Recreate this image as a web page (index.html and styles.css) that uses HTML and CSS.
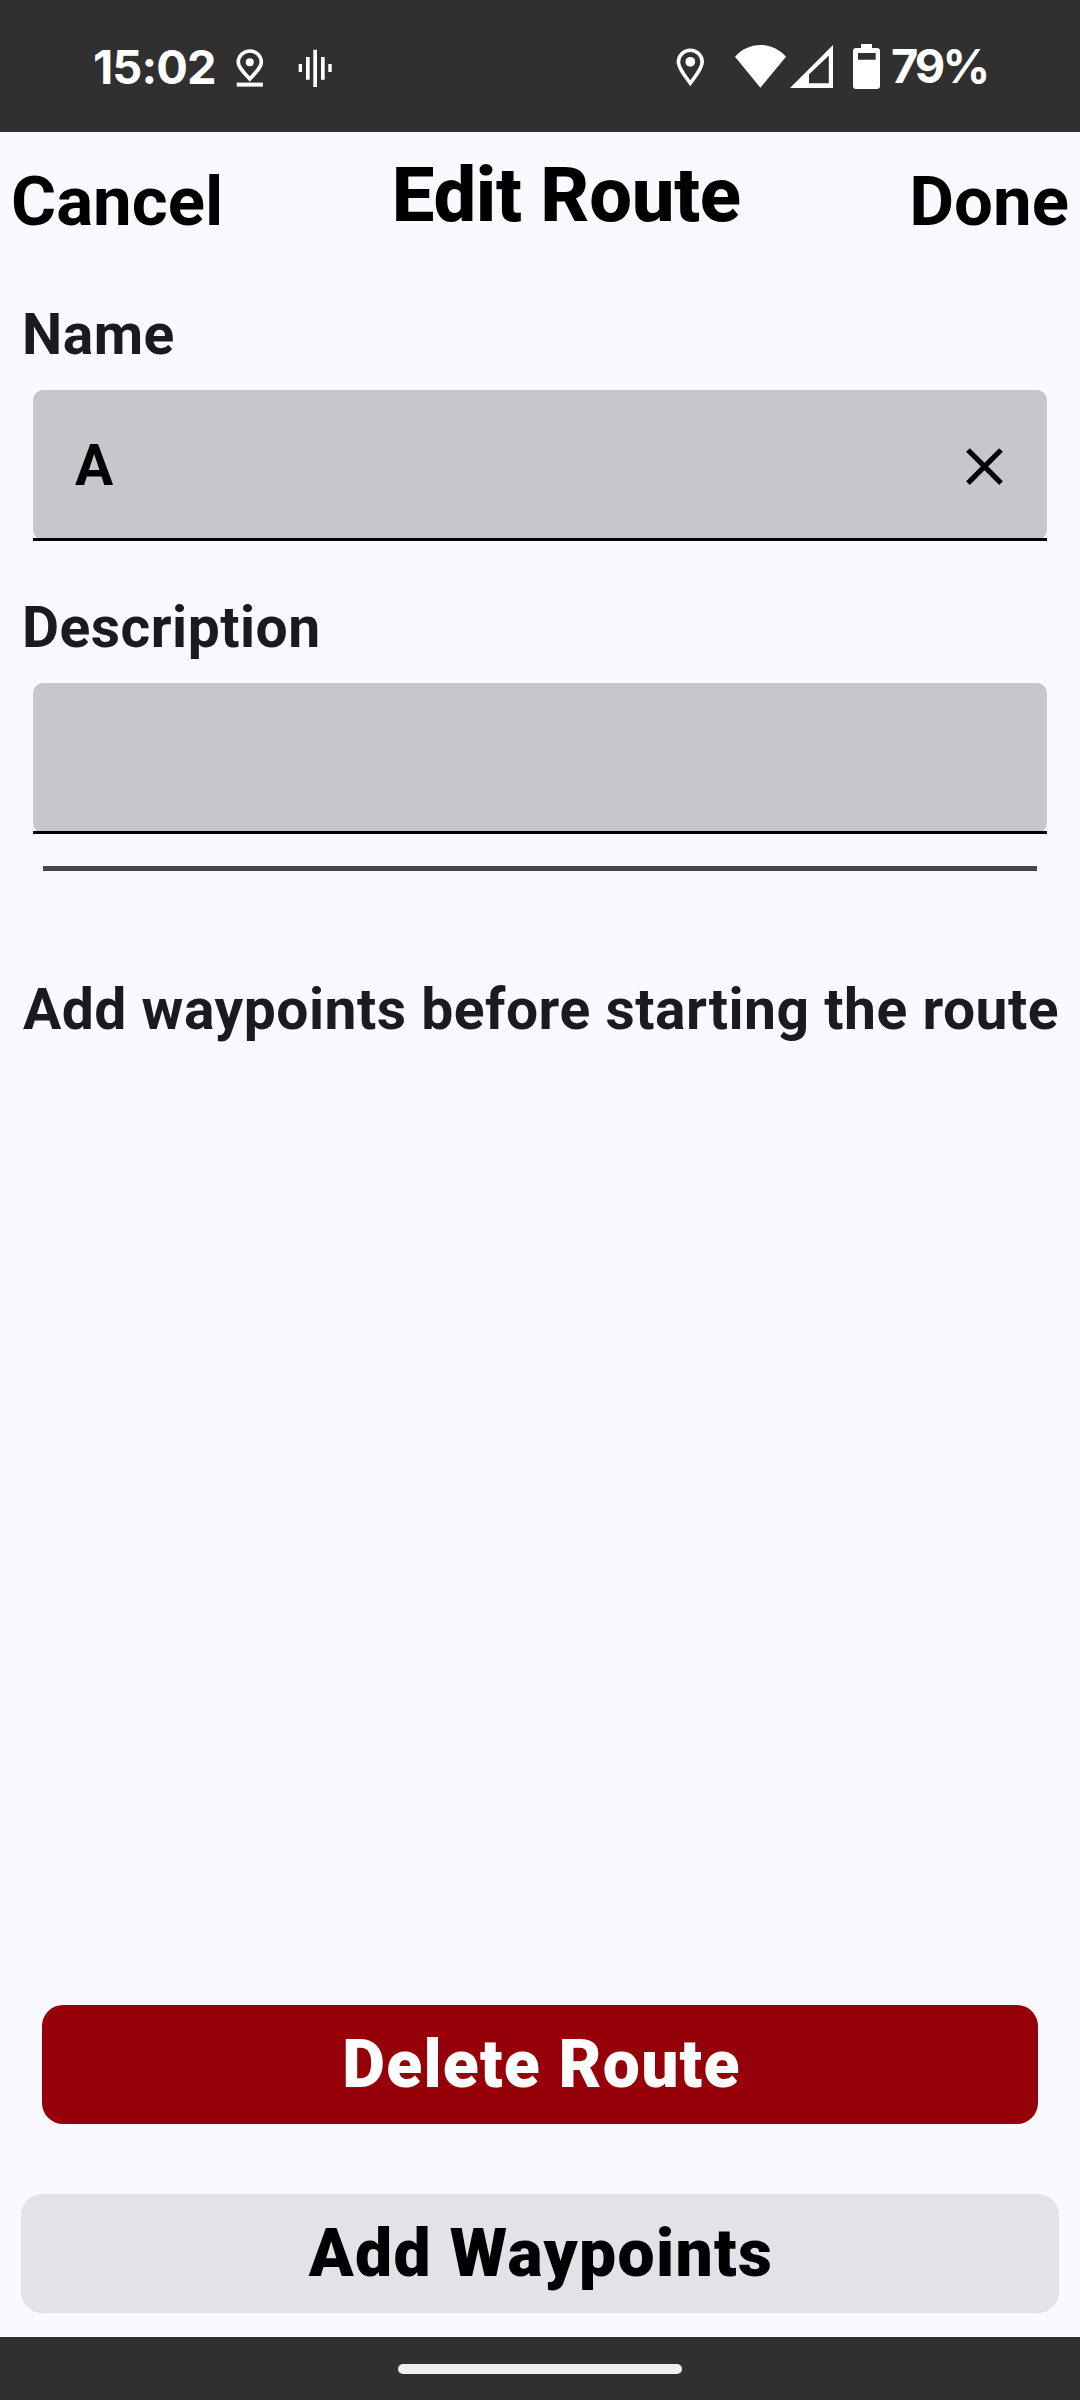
FILE: index.html
```html
<!DOCTYPE html>
<html lang="en">
<head>
<meta charset="utf-8">
<title>Edit Route</title>
<link rel="stylesheet" href="styles.css">
</head>
<body>
<div class="screen">
  <div class="status-bar">
    <div class="status-left">
      <span class="clock">15:02</span>
      <svg class="icon-drop" width="28" height="40" viewBox="0 0 28 40" fill="none">
        <path d="M13.8 31C7.8 24.6 2.3 19 2.3 14.2a11.5 11.2 0 0 1 23 0C25.3 19 19.8 24.6 13.8 31z" stroke="#fff" stroke-width="3.6"/>
        <circle cx="13.8" cy="14.2" r="4" fill="#fff"/>
        <path d="M.7 34.6h26.2v4H.7z" fill="#fff"/>
      </svg>
      <svg class="icon-wave" width="34" height="40" viewBox="0 0 34 40" fill="#fff">
        <path d="M.7 16H4v8H.7zM8 9h3.7v22.7H8zM15.3 1.7H19V39h-3.7zM23 9h3.7v22.7H23zM30.3 16h3.4v8h-3.4z"/>
      </svg>
    </div>
    <div class="status-right">
      <svg class="icon-pin" width="28" height="40" viewBox="0 0 28 40" fill="none">
        <path d="M14.3 35.2C9.4 28.4 2.4 20.5 2.4 14a11.9 11.7 0 0 1 23.8 0C26.2 20.5 19.2 28.4 14.3 35.2z" stroke="#fff" stroke-width="3.6"/>
        <circle cx="14.3" cy="13.8" r="4.9" fill="#fff"/>
      </svg>
      <svg class="icon-wifi" width="52" height="44" viewBox="0 0 52 44" fill="#fff">
        <path d="M0 12.7C7 5 16 1 25.4 1S44 5 51 12.7L25.4 43.7z"/>
      </svg>
      <svg class="icon-signal" width="43" height="44" viewBox="0 0 43 44" fill="#fff">
        <path fill-rule="evenodd" d="M0 44 43 1v43zM19 30.6V39.3h19.8V11.4z"/>
      </svg>
      <svg class="icon-battery" width="27" height="46" viewBox="0 0 27 46" fill="#fff">
        <path fill-rule="evenodd" d="M8 1h11v4h5a3 3 0 0 1 3 3v35a3 3 0 0 1-3 3H3a3 3 0 0 1-3-3V8a3 3 0 0 1 3-3h5zM5 10v6.7h17.7V10z"/>
      </svg>
      <span class="battery-level">79%</span>
    </div>
  </div>

  <header class="header">
    <span class="header-action">Cancel</span>
    <h1 class="title">Edit Route</h1>
    <span class="header-action">Done</span>
  </header>

  <main class="content">
    <div class="label">Name</div>
    <div class="field">
      <div class="field-box">
        <span class="field-value">A</span>
        <svg class="clear" width="63" height="63" viewBox="0 0 24 24"><path d="M19 6.41 17.59 5 12 10.59 6.41 5 5 6.41 10.59 12 5 17.59 6.41 19 12 13.41 17.59 19 19 17.59 13.41 12z"/></svg>
      </div>
    </div>
    <div class="label label-description">Description</div>
    <div class="field"><div class="field-box"></div></div>
    <div class="divider"></div>
    <p class="hint">Add waypoints before starting the route</p>
  </main>

  <div class="actions">
    <div class="button button-delete">Delete Route</div>
    <div class="button button-add">Add Waypoints</div>
  </div>

  <div class="nav-bar"><div class="nav-handle"></div></div>
</div>
</body>
</html>
```

FILE: styles.css
```css
* { box-sizing: border-box; }

body {
  margin: 0;
  background: #f9f9ff;
  font-family: Roboto, sans-serif;
  color: #000;
}

.screen {
  display: flex;
  flex-direction: column;
  width: 1080px;
  height: 2400px;
  white-space: nowrap;
}

.status-bar {
  display: flex;
  justify-content: space-between;
  height: 132px;
  padding: 0 92px 0 93px;
  background: #303030;
  color: #fff;
  font: 700 47px/60px Inter, sans-serif;
}

.status-left,
.status-right {
  display: flex;
  align-items: flex-start;
}

.clock {
  width: 143px;
  margin-top: 37px;
  letter-spacing: -0.9px;
}

.icon-drop { margin-top: 48px; }
.icon-wave { margin: 48px 0 0 34px; }
.icon-pin { margin-top: 48px; }
.icon-wifi { margin: 44px 0 0 31px; }
.icon-signal { margin: 44px 0 0 3px; }
.icon-battery { margin: 43px 0 0 20px; }

.battery-level {
  width: 97px;
  margin: 36px 0 0 11px;
  letter-spacing: -3px;
}

.header {
  display: flex;
  align-items: flex-start;
  justify-content: space-between;
  height: 168px;
  padding: 18px 11px 0 11px;
}

.header-action {
  margin-top: 12px;
  font-size: 69px;
  font-weight: 700;
  line-height: 80px;
}

.title {
  margin: 0;
  font-size: 76px;
  font-weight: 850;
  line-height: 90px;
  letter-spacing: -0.3px;
}

.content {
  display: flex;
  flex-direction: column;
  flex: 1;
}

.label,
.hint {
  margin: 0;
  color: #1a1b20;
  font-size: 57px;
  font-weight: 700;
  line-height: 70px;
  letter-spacing: 0.48px;
}

.label { padding-left: 22px; }
.label-description { margin-top: 52px; }

.field {
  height: 151px;
  margin: 20px 33px 0;
  border-bottom: 3px solid #000;
}

.field-box {
  display: flex;
  align-items: center;
  justify-content: space-between;
  height: 150px;
  padding: 0 31px 0 42px;
  border-radius: 10px;
  background: #c6c7cc;
  clip-path: inset(0 0 2px 0);
}

.field-value {
  margin-top: 2px;
  font-size: 57px;
  font-weight: 700;
  line-height: 70px;
}

.clear { margin-top: 3px; }

.divider {
  height: 5px;
  margin: 32px 43px 0;
  background: #45474c;
}

.hint {
  margin-top: 104px;
  padding-left: 2px;
  letter-spacing: 0.5px;
  text-align: center;
}

.actions {
  display: flex;
  flex-direction: column;
  gap: 70px;
  padding: 0 21px 24px;
}

.button {
  height: 119px;
  padding-left: 2px;
  border-radius: 21px;
  font-size: 66px;
  font-weight: 900;
  line-height: 119px;
  letter-spacing: 1.2px;
  text-align: center;
}

.button-delete {
  margin: 0 21px;
  padding-left: 3px;
  background: #960008;
  color: #fff;
}

.button-add {
  background: #e2e2e8;
  letter-spacing: 1.35px;
}

.nav-bar {
  height: 63px;
  padding-top: 27px;
  background: #303030;
}

.nav-handle {
  width: 284px;
  height: 10px;
  margin: 0 auto;
  border-radius: 5px;
  background: #efefef;
}
```
